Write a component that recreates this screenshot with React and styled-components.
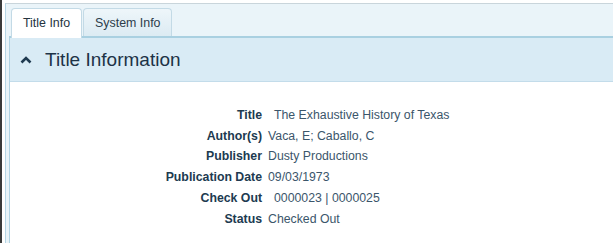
import { Fragment } from 'react';
import styled, { createGlobalStyle } from 'styled-components';

const Global = createGlobalStyle`
  html, body {
    margin: 0;
    padding: 0;
    background: #ffffff;
    font-family: "Liberation Sans", Arial, sans-serif;
  }
`

const Frame = styled.div`
  height: 243px;
  box-sizing: border-box;
  border-left: 2px solid #3a3a3a;
  padding: 3px 0 0 3px;
  overflow: hidden;
`

const Outer = styled.div`
  height: 100%;
  box-sizing: border-box;
  border-left: 1px solid #b6d6e5;
  border-top: 1px solid #c9d5db;
  background: #eaf4f9;
  padding: 0 0 0 3px;
  display: flex;
  flex-direction: column;
`

const TabBar = styled.div`
  display: flex;
  align-items: flex-end;
  gap: 1px;
  height: 34px;
  padding-left: 2px;
  border-bottom: 2px solid #a9d0e1;
  box-sizing: border-box;
`

const Tab = styled.div`
  height: ${p => (p.$active ? '30px' : '28px')};
  margin-bottom: ${p => (p.$active ? '-2px' : '0')};
  box-sizing: border-box;
  padding: 0 11px 0 11px;
  display: flex;
  align-items: center;
  font-size: 12.4px;
  color: ${p => (p.$active ? '#25343f' : '#2c3d4b')};
  border: 1px solid #c3dae6;
  border-bottom: none;
  border-radius: 4px 4px 0 0;
  background: ${p => (p.$active ? '#ffffff' : 'linear-gradient(#eef6fa, #dcebf3)')};
  padding-bottom: ${p => (p.$active ? '2px' : '0')};
`

const Panel = styled.div`
  flex: 1;
  border-left: 1px solid #b0d3e3;
  background: #ffffff;
`

const Heading = styled.div`
  height: 44px;
  box-sizing: border-box;
  background: #d9ebf5;
  border-bottom: 1px solid #c3dcea;
  display: flex;
  align-items: center;
  padding-left: 10px;
  gap: 13px;
  color: #1d3347;
  font-size: 19px;
`

const Details = styled.div`
  display: grid;
  grid-template-columns: 252px 1fr;
  column-gap: 6px;
  padding-top: 23px;
  font-size: 12.3px;
  line-height: 20.7px;
`

const Label = styled.div`
  text-align: right;
  font-weight: bold;
  color: #203a50;
`

const Value = styled.div`
  color: #3b566b;
  padding-left: ${p => (p.$spaced ? '6px' : '0')};
`

const rows = [
  ['Title', 'The Exhaustive History of Texas', true],
  ['Author(s)', 'Vaca, E; Caballo, C'],
  ['Publisher', 'Dusty Productions'],
  ['Publication Date', '09/03/1973'],
  ['Check Out', '0000023 | 0000025', true],
  ['Status', 'Checked Out'],
]

const Chevron = () => (
  <svg width="12" height="8" viewBox="0 0 12 8">
    <polyline points="1.5,6.5 6,2 10.5,6.5" fill="none" stroke="#1f3a50" strokeWidth="2.6" />
  </svg>
)

const App = () => {
  return (
    <Frame>
      <Global />
      <Outer>
        <TabBar>
          <Tab $active>Title Info</Tab>
          <Tab>System Info</Tab>
        </TabBar>
        <Panel>
          <Heading>
            <Chevron />
            <span>Title Information</span>
          </Heading>
          <Details>
            {rows.map(([label, value, spaced]) => (
              <Fragment key={label}>
                <Label>{label}</Label>
                <Value $spaced={spaced}>{value}</Value>
              </Fragment>
            ))}
          </Details>
        </Panel>
      </Outer>
    </Frame>
  )
}

export default App
